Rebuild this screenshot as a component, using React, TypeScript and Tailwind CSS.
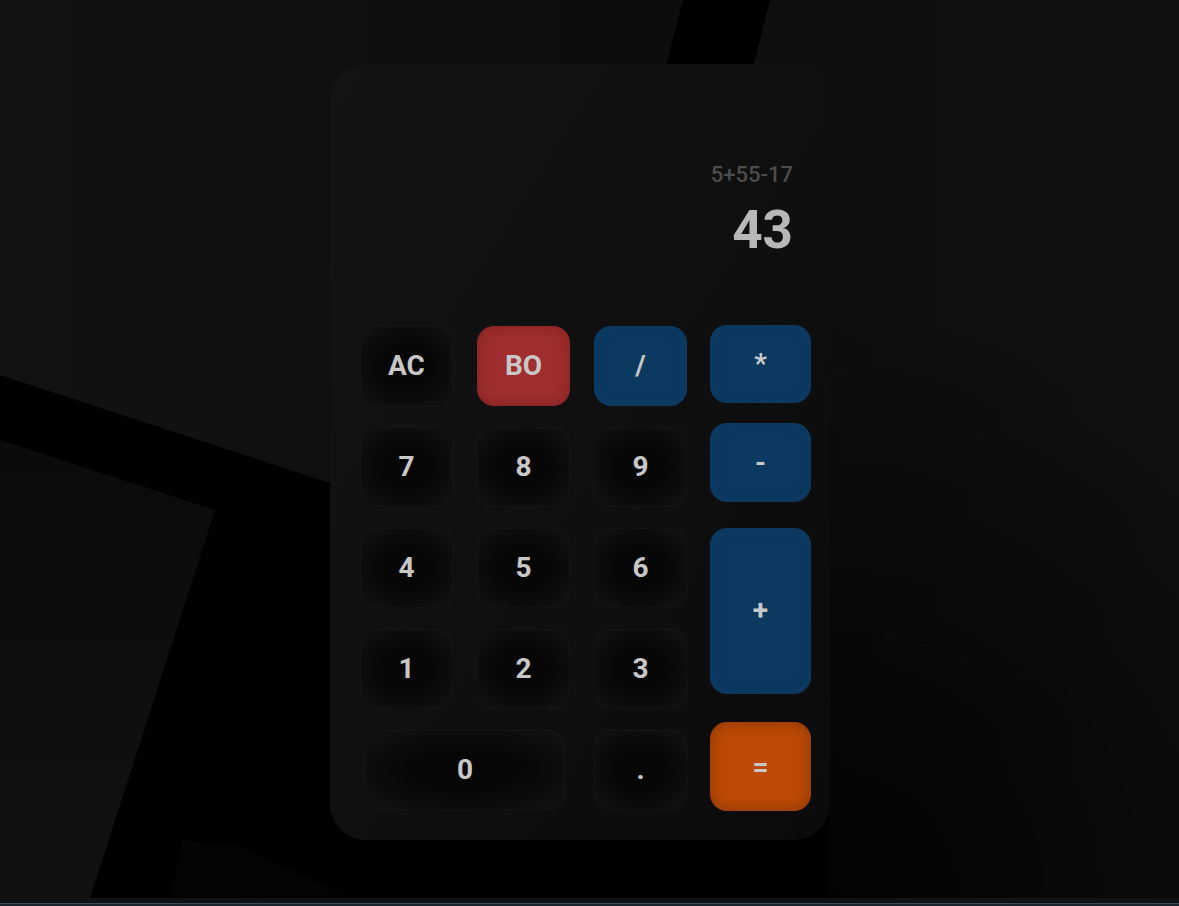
import React from 'react'

type Key = {
  label: string
  kind: 'digit' | 'clear' | 'op' | 'equals'
  span?: boolean
}

// left 3x5 pad, the operator column is laid out on its own
const padKeys: Key[] = [
  { label: 'AC', kind: 'digit' },
  { label: 'BO', kind: 'clear' },
  { label: '/', kind: 'op' },
  { label: '7', kind: 'digit' },
  { label: '8', kind: 'digit' },
  { label: '9', kind: 'digit' },
  { label: '4', kind: 'digit' },
  { label: '5', kind: 'digit' },
  { label: '6', kind: 'digit' },
  { label: '1', kind: 'digit' },
  { label: '2', kind: 'digit' },
  { label: '3', kind: 'digit' },
  { label: '0', kind: 'digit', span: true },
  { label: '.', kind: 'digit' },
]

const kindClass: Record<Key['kind'], string> = {
  digit:
    'border border-[#ffffff07] bg-[radial-gradient(ellipse_at_center,#060606_35%,#121212_100%)]',
  clear: 'bg-[#a02e2e] shadow-[inset_0_0_14px_rgba(60,10,10,0.35)]',
  op: 'bg-[#0b3960] shadow-[inset_0_0_14px_rgba(20,60,100,0.45)]',
  equals: 'bg-[#bd4a04] shadow-[inset_0_0_16px_rgba(90,40,10,0.55)]',
}

function PadButton({ k, className = '' }: { k: Key; className?: string }) {
  return (
    <button
      type="button"
      className={`flex items-center justify-center rounded-[17px] text-[28px] font-bold leading-none text-[#c8c8c8] ${kindClass[k.kind]} ${className}`}
    >
      {k.label}
    </button>
  )
}

function Backdrop() {
  // dimmed abstract wallpaper behind the calculator
  return (
    <svg
      aria-hidden="true"
      className="absolute inset-0 h-full w-full"
      viewBox="0 0 1179 898"
      preserveAspectRatio="none"
    >
      <defs>
        <linearGradient id="base" x1="0" y1="0" x2="1" y2="0">
          <stop offset="0" stopColor="#121212" />
          <stop offset="0.55" stopColor="#0d0d0d" />
          <stop offset="1" stopColor="#111111" />
        </linearGradient>
        <radialGradient id="shade" cx="830" cy="898" r="600" gradientUnits="userSpaceOnUse">
          <stop offset="0" stopColor="#000" stopOpacity="0.8" />
          <stop offset="0.6" stopColor="#000" stopOpacity="0.35" />
          <stop offset="1" stopColor="#000" stopOpacity="0" />
        </radialGradient>
        <linearGradient id="quad" x1="0" y1="0" x2="0" y2="1">
          <stop offset="0" stopColor="#0b0b0b" />
          <stop offset="1" stopColor="#111111" />
        </linearGradient>
      </defs>
      <rect width="1179" height="898" fill="url(#base)" />
      <rect width="1179" height="898" fill="url(#shade)" />
      <polygon points="683,0 770,0 690,320 600,320" fill="#000" />
      <polygon points="0,375 330,483 829,640 829,898 0,898" fill="#000" />
      <polygon points="830,615 1179,722 1179,723 830,617" fill="#0c0c0c" />
      <polygon points="0,440 215,510 90,898 0,898" fill="url(#quad)" />
      <polygon points="183,840 240,846 345,895 170,898" fill="#040404" />
    </svg>
  )
}

export default function App() {
  return (
    <div
      className="flex h-[906px] w-full flex-col overflow-hidden bg-[#0e0e0e]"
      style={{ fontFamily: 'Roboto, "Liberation Sans", sans-serif' }}
    >
      <main className="relative flex-1">
        <Backdrop />

        <div className="relative pl-[330px] pt-[64px]">
          <section className="flex h-[776px] w-[500px] flex-col rounded-[36px] bg-gradient-to-br from-[#141414] to-[#0b0b0b]">
            {/* display */}
            <div className="flex flex-col items-end pr-[37px] pt-[98px]">
              <p className="h-[26px] text-[22px] font-medium leading-[26px] text-[#4c4c4c]">
                5+55-17
              </p>
              <p className="mt-[15px] h-[54px] text-[53px] font-bold leading-[54px] text-[#b8b8b8]">
                43
              </p>
            </div>

            {/* keypad */}
            <div className="mt-[69px] flex gap-[23px] pl-[30px]">
              <div className="grid w-[327px] grid-cols-3 auto-rows-[80px] gap-x-6 gap-y-[21px]">
                {padKeys.map((k) => (
                  <PadButton
                    key={k.label}
                    k={k}
                    className={k.span ? 'col-span-2 mx-[5px]' : ''}
                  />
                ))}
              </div>

              <div className="flex w-[101px] flex-col">
                <PadButton k={{ label: '*', kind: 'op' }} className="-mt-px h-[78px]" />
                <PadButton k={{ label: '-', kind: 'op' }} className="mt-[20px] h-[79px]" />
                <PadButton k={{ label: '+', kind: 'op' }} className="mt-[26px] h-[166px]" />
                <PadButton k={{ label: '=', kind: 'equals' }} className="mt-[28px] h-[89px]" />
              </div>
            </div>
          </section>
        </div>
      </main>

      {/* bottom edge strip */}
      <div className="h-[8px] bg-[#121212]">
        <div className="mt-[5px] h-[3px] border-t border-[#3a4a58] bg-[#1b2530]" />
      </div>
    </div>
  )
}
